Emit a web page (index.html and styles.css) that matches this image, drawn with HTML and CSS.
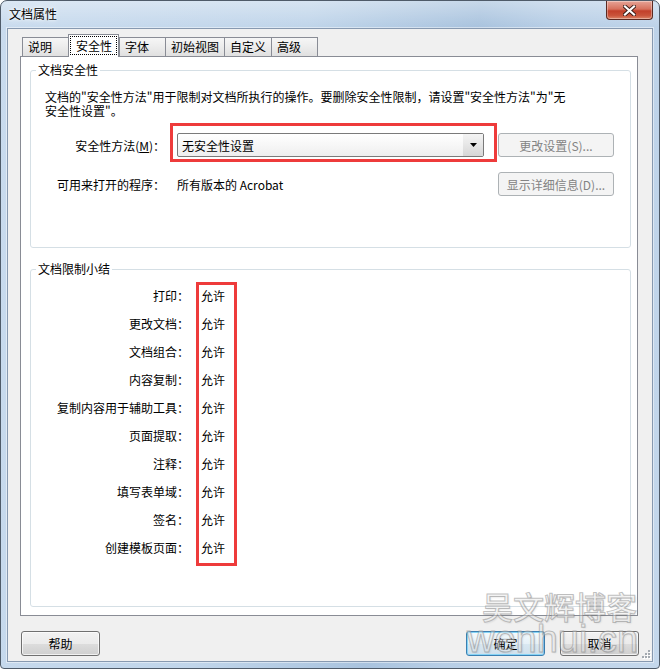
FILE: index.html
```html
<!DOCTYPE html>
<html lang="zh-CN">
<head>
    <meta charset="UTF-8">
    <title>文档属性</title>
    <link rel="stylesheet" href="styles.css">
</head>
<body>
    <div class="window">
        <div class="titlebar">
            <span class="title">文档属性</span>
            <div class="close-btn">
                <svg width="13" height="11" viewBox="0 0 13 11">
                    <path d="M2 1.5 L11 9.5 M11 1.5 L2 9.5" stroke="#3b1d18" stroke-width="4" stroke-linecap="square"/>
                    <path d="M2 1.5 L11 9.5 M11 1.5 L2 9.5" stroke="#ffffff" stroke-width="2.2" stroke-linecap="square"/>
                </svg>
            </div>
        </div>

        <div class="client">
            <div class="tabs">
                <div class="tab">说明</div>
                <div class="tab active"><span class="tab-focus">安全性</span></div>
                <div class="tab">字体</div>
                <div class="tab">初始视图</div>
                <div class="tab">自定义</div>
                <div class="tab">高级</div>
            </div>

            <div class="panel">
                <fieldset class="group group-security">
                    <legend>文档安全性</legend>
                    <p class="desc">文档的"安全性方法"用于限制对文档所执行的操作。要删除安全性限制，请设置"安全性方法"为"无<br>安全性设置"。</p>

                    <div class="field-row">
                        <span class="field-label">安全性方法(<u>M</u>)：</span>
                        <div class="combo marked">
                            <span class="combo-text">无安全性设置</span>
                            <span class="combo-arrow">
                                <svg width="7" height="4" viewBox="0 0 7 4"><polygon points="0,0 7,0 3.5,4" fill="#000"/></svg>
                            </span>
                        </div>
                        <button class="btn btn-disabled">更改设置(S)...</button>
                    </div>

                    <div class="field-row">
                        <span class="field-label">可用来打开的程序：</span>
                        <span class="field-value">所有版本的 Acrobat</span>
                        <button class="btn btn-disabled">显示详细信息(D)...</button>
                    </div>
                </fieldset>

                <fieldset class="group group-summary">
                    <legend>文档限制小结</legend>
                    <div class="summary">
                        <div class="summary-labels">
                            <div>打印：</div>
                            <div>更改文档：</div>
                            <div>文档组合：</div>
                            <div>内容复制：</div>
                            <div>复制内容用于辅助工具：</div>
                            <div>页面提取：</div>
                            <div>注释：</div>
                            <div>填写表单域：</div>
                            <div>签名：</div>
                            <div>创建模板页面：</div>
                        </div>
                        <div class="summary-values marked">
                            <div>允许</div>
                            <div>允许</div>
                            <div>允许</div>
                            <div>允许</div>
                            <div>允许</div>
                            <div>允许</div>
                            <div>允许</div>
                            <div>允许</div>
                            <div>允许</div>
                            <div>允许</div>
                        </div>
                    </div>
                </fieldset>
            </div>

            <div class="footer">
                <button class="btn">帮助</button>
                <div class="footer-right">
                    <button class="btn btn-default">确定</button>
                    <button class="btn">取消</button>
                </div>
            </div>

            <svg class="grip" width="10" height="10" viewBox="0 0 10 10">
                <rect x="8" y="2" width="2" height="2" fill="#fff"/>
                <rect x="5" y="5" width="2" height="2" fill="#fff"/>
                <rect x="8" y="5" width="2" height="2" fill="#fff"/>
                <rect x="2" y="8" width="2" height="2" fill="#fff"/>
                <rect x="5" y="8" width="2" height="2" fill="#fff"/>
                <rect x="8" y="8" width="2" height="2" fill="#fff"/>
                <rect x="7" y="1" width="2" height="2" fill="#a3a9b0"/>
                <rect x="4" y="4" width="2" height="2" fill="#a3a9b0"/>
                <rect x="7" y="4" width="2" height="2" fill="#a3a9b0"/>
                <rect x="1" y="7" width="2" height="2" fill="#a3a9b0"/>
                <rect x="4" y="7" width="2" height="2" fill="#a3a9b0"/>
                <rect x="7" y="7" width="2" height="2" fill="#a3a9b0"/>
            </svg>
        </div>

        <div class="watermark">
            <div class="wm-cn">吴文辉博客</div>
            <div class="wm-en">wenhui.cn</div>
        </div>
    </div>
</body>
</html>
```

FILE: styles.css
```css
:root {
    --text-color: #000;
    --panel-border: #898c95;
    --group-border: #d5dfe5;
    --mark-color: #ee3b3b;
    --face-color: #f0f0f0;
}

* {
    box-sizing: border-box;
}

body {
    margin: 0;
    background: #fff;
    font-family: "Noto Sans CJK SC", sans-serif;
    font-size: 12px;
    color: var(--text-color);
}

/* Window frame */
.window {
    position: relative;
    width: 660px;
    height: 669px;
    display: flex;
    flex-direction: column;
    padding: 0 6px 6px;
    border: 1px solid #4f5b69;
    border-radius: 7px 7px 4px 4px;
    overflow: hidden;
    background:
        linear-gradient(180deg, rgba(255, 255, 255, 0.35) 0, rgba(255, 255, 255, 0) 26px),
        linear-gradient(100deg, #c9dbee 0%, #c0d5ea 40%, #a9c3de 62%, #b7cee6 72%, #c5d8ec 100%);
}

.titlebar {
    height: 27px;
    flex: none;
    display: flex;
    justify-content: space-between;
    align-items: flex-start;
}

.title {
    padding-left: 2px;
    line-height: 26px;
    text-shadow: 0 0 6px #fff, 0 0 3px #fff;
}

.close-btn {
    width: 47px;
    height: 19px;
    display: flex;
    align-items: center;
    justify-content: center;
    border: 1px solid #5b2a22;
    border-top: none;
    border-radius: 0 0 4px 4px;
    background: linear-gradient(180deg, #e6a497 0%, #d6715d 45%, #c2402a 55%, #c9533a 80%, #dc8466 100%);
    box-shadow: inset 0 0 0 1px rgba(255, 255, 255, 0.35);
}

/* Client area */
.client {
    position: relative;
    flex: none;
    display: flex;
    flex-direction: column;
    padding: 5px 0;
    background: var(--face-color);
    border: 1px solid #8799b0;
    box-shadow: 0 0 0 1px rgba(255, 255, 255, 0.45);
}

/* Tabs */
.tabs {
    display: flex;
    align-items: flex-end;
    height: 22px;
    padding-left: 14px;
}

.tab {
    min-width: 47px;
    height: 19px;
    margin-right: -1px;
    padding: 0 5px;
    line-height: 18px;
    white-space: nowrap;
    border: 1px solid var(--panel-border);
    border-bottom: none;
    background: linear-gradient(180deg, #f6f6f6 0%, #ececec 50%, #e0e0e0 100%);
}

.tab.active {
    position: relative;
    z-index: 1;
    height: 23px;
    margin-bottom: -1px;
    margin-right: 0;
    min-width: 0;
    padding: 1px;
    background: #fff;
}

.tab-focus {
    display: block;
    height: 19px;
    padding: 0 4px 0 5px;
    line-height: 17px;
    border: 1px dotted #000;
}

/* Tab page */
.panel {
    margin: 0 14px 0 12px;
    padding: 6px 6px 8px 9px;
    background: #fff;
    border: 1px solid var(--panel-border);
}

.group {
    margin: 0;
    min-width: 0;
    border: 1px solid var(--group-border);
    border-radius: 3px;
}

.group legend {
    margin-left: 5px;
    padding: 0 2px;
    line-height: 14px;
}

.group-security {
    padding: 13px 16px 51px 0;
}

.group-summary {
    margin-top: 14px;
    padding: 6px 0 44px 0;
}

.desc {
    margin: 0;
    padding-left: 14px;
    line-height: 14px;
}

.field-row {
    display: flex;
    align-items: center;
    height: 24px;
    margin-top: 15px;
}

.field-label {
    flex: none;
    width: 134px;
    text-align: right;
    white-space: nowrap;
}

.field-value {
    margin-left: 12px;
}

.field-row .btn {
    width: 116px;
    height: 24px;
    margin-left: auto;
}

/* Drop-down */
.combo {
    flex: none;
    width: 307px;
    height: 24px;
    margin-left: 12px;
    display: flex;
    align-items: center;
    border: 1px solid #7a7a7a;
    border-radius: 2px;
    background: linear-gradient(180deg, #ffffff 0%, #f7f7f7 50%, #eeeeee 100%);
}

.combo-text {
    flex: 1;
    padding-left: 4px;
}

.combo-arrow {
    width: 20px;
    height: 100%;
    display: flex;
    align-items: center;
    justify-content: center;
    background: linear-gradient(180deg, #f4f4f4 0%, #e6e6e6 50%, #d6d6d6 100%);
}

/* Summary list */
.summary {
    display: flex;
    line-height: 28px;
}

.summary-labels {
    width: 158px;
    text-align: right;
}

.summary-values {
    margin-left: 12px;
}

/* Red annotation frames */
.marked {
    position: relative;
}

.marked::after {
    content: '';
    position: absolute;
    border: 3px solid var(--mark-color);
    pointer-events: none;
}

.combo.marked::after {
    top: -11px;
    bottom: -6px;
    left: -8px;
    right: -14px;
}

.summary-values.marked::after {
    top: 0;
    bottom: -4px;
    left: -5px;
    right: -12px;
}

/* Buttons */
.btn {
    width: 79px;
    height: 25px;
    padding: 0;
    font-family: inherit;
    font-size: 12px;
    color: var(--text-color);
    border: 1px solid #707070;
    border-radius: 3px;
    background: linear-gradient(180deg, #f2f2f2 0%, #ebebeb 50%, #dddddd 50%, #cfcfcf 100%);
    box-shadow: inset 0 0 0 1px rgba(255, 255, 255, 0.7);
}

.btn-disabled {
    color: #838383;
    border-color: #adb2b5;
    background: #f4f4f4;
    box-shadow: none;
}

.btn-default {
    border-color: #3c7fb1;
    background: linear-gradient(180deg, #f4fafd 0%, #e6f1f8 50%, #d9e8f2 50%, #cfe0ec 100%);
    box-shadow: inset 0 0 0 1px #86d4f6;
}

.footer {
    display: flex;
    justify-content: space-between;
    margin-top: 15px;
    padding: 0 13px;
}

.footer-right {
    display: flex;
    gap: 15px;
}

.grip {
    position: absolute;
    right: 1px;
    bottom: 2px;
}

/* Blog watermark over the dialog */
.watermark {
    position: absolute;
    left: 466px;
    top: 588px;
    pointer-events: none;
    color: rgba(255, 255, 255, 0.4);
    -webkit-text-stroke: 1px rgba(130, 130, 130, 0.5);
    text-shadow: 1px 1px 2px rgba(0, 0, 0, 0.1);
}

.wm-cn {
    margin-left: 15px;
    font-size: 31px;
    line-height: 34px;
    font-weight: 500;
}

.wm-en {
    font-family: "Liberation Sans", sans-serif;
    font-size: 38px;
    line-height: 38px;
    margin-top: -3px;
}
```
